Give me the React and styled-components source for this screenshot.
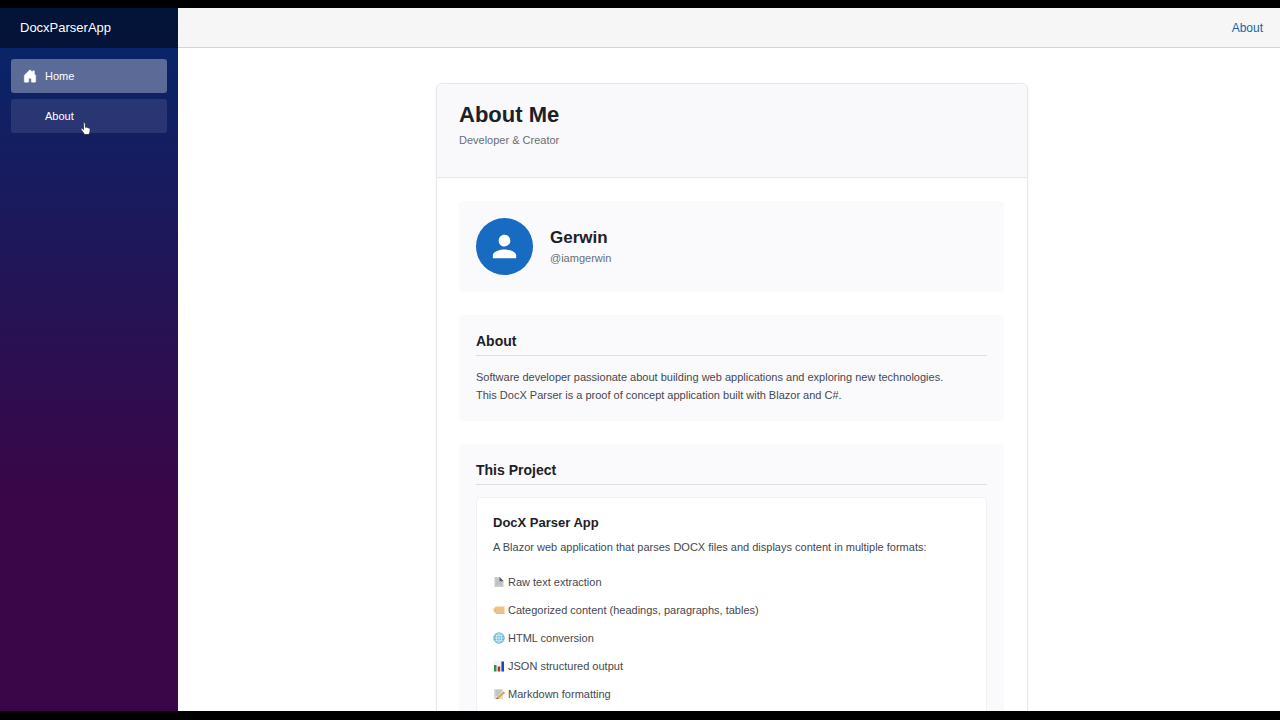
import React from 'react';
import styled, { createGlobalStyle } from 'styled-components';

const GlobalStyle = createGlobalStyle`
  * {
    box-sizing: border-box;
  }

  body {
    margin: 0;
    background-color: #000;
    color: #1d2126;
    font-family: "Liberation Sans", Arial, sans-serif;
    font-size: 11px;
    line-height: 18px;
  }

  h1, h2, h3, p, ul {
    margin: 0;
    padding: 0;
  }
`;

const Page = styled.div`
  display: flex;
  height: 100vh;
  border-top: 8px solid #000;
  border-bottom: 9px solid #000;
  background-color: #fff;
  overflow: hidden;
`;

const Sidebar = styled.aside`
  flex: 0 0 178px;
  background-image: linear-gradient(180deg, #05276b 0%, #3a0647 70%);
`;

const Brand = styled.div`
  display: flex;
  align-items: center;
  height: 40px;
  padding: 0 20px;
  background-color: rgba(0, 0, 0, 0.47);

  a {
    color: #fff;
    font-size: 13px;
    text-decoration: none;
  }
`;

const Nav = styled.nav`
  display: flex;
  flex-direction: column;
  gap: 6px;
  padding: 11px;
`;

const NavItem = styled.a`
  display: flex;
  align-items: center;
  gap: 8px;
  height: 34px;
  padding: 0 12px;
  border-radius: 3px;
  color: #fff;
  background-color: rgba(255, 255, 255, ${props => props.$active ? 0.33 : 0.1});
  text-decoration: none;
`;

const NavIcon = styled.span`
  display: flex;
  width: 14px;
  height: 14px;
`;

const Main = styled.main`
  flex: 1;
  min-width: 0;
  overflow: hidden;
`;

const TopRow = styled.div`
  display: flex;
  align-items: center;
  justify-content: flex-end;
  height: 40px;
  padding: 0 17px;
  background-color: #f6f6f6;
  border-bottom: 1px solid #d6d5d5;

  a {
    color: #1267b3;
    font-size: 12px;
    text-decoration: none;
  }
`;

const Content = styled.article`
  padding: 35px 17px 35px 23px;
`;

const Card = styled.div`
  max-width: 592px;
  margin: 0 auto;
  border: 1px solid #e6e7ea;
  border-radius: 6px;
  background-color: #fff;
  box-shadow: 0 1px 3px rgba(0, 0, 0, 0.05);
  overflow: hidden;
`;

const CardHeader = styled.header`
  padding: 17px 22px 28px;
  background-color: #f9f9fc;
  border-bottom: 1px solid #e6e7ea;
`;

const Title = styled.h1`
  font-size: 22px;
  line-height: 28px;
  margin-bottom: 2px;
`;

const Muted = styled.p`
  color: #6a6d73;
`;

const CardBody = styled.div`
  display: flex;
  flex-direction: column;
  gap: 23px;
  padding: 23px 23px 23px 22px;
`;

const Section = styled.section`
  padding: 17px;
  border-radius: 4px;
  background-color: #fafafd;
`;

const Profile = styled(Section)`
  display: flex;
  align-items: center;
  gap: 17px;
`;

const Avatar = styled.div`
  display: flex;
  align-items: center;
  justify-content: center;
  width: 57px;
  height: 57px;
  border-radius: 50%;
  background-color: #176bc0;
`;

const Name = styled.h2`
  font-size: 17px;
  line-height: 22px;
`;

const SectionTitle = styled.h2`
  margin-bottom: 12px;
  padding-bottom: 5px;
  border-bottom: 1px solid #dcdee6;
  font-size: 14px;
  line-height: 18px;
`;

const Text = styled.p`
  color: #45484e;
`;

const ProjectCard = styled.div`
  padding: 16px;
  border: 1px solid #f0f1f5;
  border-radius: 4px;
  background-color: #fff;
`;

const ProjectTitle = styled.h3`
  margin-bottom: 6px;
  font-size: 13px;
  line-height: 18px;
`;

const FeatureList = styled.ul`
  margin-top: 12px;
  list-style: none;
`;

const Feature = styled.li`
  display: flex;
  align-items: center;
  gap: 3px;
  height: 28px;
  color: #45484e;
`;

const Pointer = styled.svg`
  position: fixed;
  left: 80px;
  top: 122px;
  pointer-events: none;
`;

const HomeIcon = () => (
  <svg width="14" height="14" viewBox="0 0 16 16" fill="#fff" aria-hidden="true">
    <path d="M6.5 14.5v-3.505c0-.245.25-.495.5-.495h2c.25 0 .5.25.5.5v3.5a.5.5 0 0 0 .5.5h4a.5.5 0 0 0 .5-.5v-7a.5.5 0 0 0-.146-.354L13 5.793V2.5a.5.5 0 0 0-.5-.5h-1a.5.5 0 0 0-.5.5v1.293L8.354 1.146a.5.5 0 0 0-.708 0l-6 6A.5.5 0 0 0 1.500 7.500v7a.5.5 0 0 0 .5.5h4a.5.5 0 0 0 .5-.5Z" stroke="#fff" strokeWidth=".6" />
  </svg>
);

const PersonIcon = () => (
  <svg width="35" height="35" viewBox="0 0 24 24" fill="#fff" aria-hidden="true">
    <path d="M12 12c2.21 0 4-1.790 4-4s-1.790-4-4-4-4 1.790-4 4 1.790 4 4 4zm0 2c-2.670 0-8 1.340-8 4v2h16v-2c0-2.660-5.330-4-8-4z" />
  </svg>
);

const icons = {
  page: (
    <>
      <path d="M1.5 1h5l4 4v6h-9z" fill="#c9cacc" />
      <path d="M6.500 1v4.200h4.200z" fill="#55585e" />
      <path d="M3 4h2.500M3 6h6M3 8h6" stroke="#a9abae" strokeWidth=".6" />
    </>
  ),
  label: (
    <>
      <path d="M3 2.500h8.500v7H3L.5 7.500v-3z" fill="#f3c088" />
      <path d="M3 9.500h8.500" stroke="#dda365" strokeWidth=".7" />
      <circle cx="2.500" cy="6" r=".7" fill="#d9a46c" />
    </>
  ),
  globe: (
    <>
      <circle cx="6" cy="6" r="5.300" fill="#73bdd9" />
      <g fill="none" stroke="#dff3fa" strokeWidth=".7">
        <ellipse cx="6" cy="6" rx="2.500" ry="5.300" />
        <path d="M6 .7v10.600M.7 6h10.600M1.500 3.300h9M1.500 8.700h9" />
      </g>
      <circle cx="6" cy="6" r="5.300" fill="none" stroke="#4c9fc1" strokeWidth=".6" />
    </>
  ),
  chart: (
    <>
      <path d="M.5.5h11v11H.5z" fill="#f1f3f5" />
      <path d="M1 5h2.500v6.500H1z" fill="#24984a" />
      <path d="M4.700 6.500h2.500v5H4.700z" fill="#b92c35" />
      <path d="M8.400 1.500h2.600v10H8.400z" fill="#174fa6" />
    </>
  ),
  memo: (
    <>
      <path d="M1 1h9v10H1z" fill="#dadbdc" />
      <path d="M2.500 3h6M2.500 5h5M2.500 7h3" stroke="#9a9da2" strokeWidth=".7" />
      <path d="M4 9.500l5.800-5.300 1.500 1.500L5.500 10.600l-2.200.4z" fill="#e5a738" />
      <path d="M9.800 4.200l.8-.7 1.300 1.400-.6.8z" fill="#d76d70" />
      <path d="M3.300 11l.7-1.500 1.500 1.100z" fill="#4d4641" />
    </>
  ),
};

const features = [
  { icon: 'page', label: 'Raw text extraction' },
  { icon: 'label', label: 'Categorized content (headings, paragraphs, tables)' },
  { icon: 'globe', label: 'HTML conversion' },
  { icon: 'chart', label: 'JSON structured output' },
  { icon: 'memo', label: 'Markdown formatting' },
];

const App = () => {
  return (
    <>
      <GlobalStyle />
      <Page>
        <Sidebar>
          <Brand>
            <a href="#home">DocxParserApp</a>
          </Brand>
          <Nav>
            <NavItem href="#home" $active>
              <NavIcon><HomeIcon /></NavIcon>
              Home
            </NavItem>
            <NavItem href="#about">
              <NavIcon />
              About
            </NavItem>
          </Nav>
        </Sidebar>

        <Main>
          <TopRow>
            <a href="#about">About</a>
          </TopRow>
          <Content>
            <Card>
              <CardHeader>
                <Title>About Me</Title>
                <Muted>Developer &amp; Creator</Muted>
              </CardHeader>
              <CardBody>
                <Profile>
                  <Avatar><PersonIcon /></Avatar>
                  <div>
                    <Name>Gerwin</Name>
                    <Muted>@iamgerwin</Muted>
                  </div>
                </Profile>

                <Section>
                  <SectionTitle>About</SectionTitle>
                  <Text>
                    Software developer passionate about building web applications and exploring new technologies.
                    <br />
                    This DocX Parser is a proof of concept application built with Blazor and C#.
                  </Text>
                </Section>

                <Section>
                  <SectionTitle>This Project</SectionTitle>
                  <ProjectCard>
                    <ProjectTitle>DocX Parser App</ProjectTitle>
                    <Text>A Blazor web application that parses DOCX files and displays content in multiple formats:</Text>
                    <FeatureList>
                      {features.map(({ icon, label }) => (
                        <Feature key={icon}>
                          <svg width="12" height="12" viewBox="0 0 12 12" aria-hidden="true">{icons[icon]}</svg>
                          {label}
                        </Feature>
                      ))}
                    </FeatureList>
                  </ProjectCard>
                </Section>
              </CardBody>
            </Card>
          </Content>
        </Main>
      </Page>

      <Pointer width="12" height="14" viewBox="0 0 12 14" aria-hidden="true">
        <path
          d="M3.300 1.500c0-1.200 1.800-1.200 1.900 0l.3 3.900c.5-.6 1.400-.4 1.600.2.600-.4 1.400-.1 1.500.5.800-.3 1.500.2 1.500 1l-.1 2.600c-.1 1-.8 1.700-.9 2.800H4.400c-.3-1.400-1.500-2.300-2.300-3.600-.5-.9-1.500-1.800-1.100-2.300.6-.8 1.800.1 2.600 1z"
          fill="#fff"
          stroke="#22242c"
          strokeWidth=".8"
        />
      </Pointer>
    </>
  );
};

export default App;
